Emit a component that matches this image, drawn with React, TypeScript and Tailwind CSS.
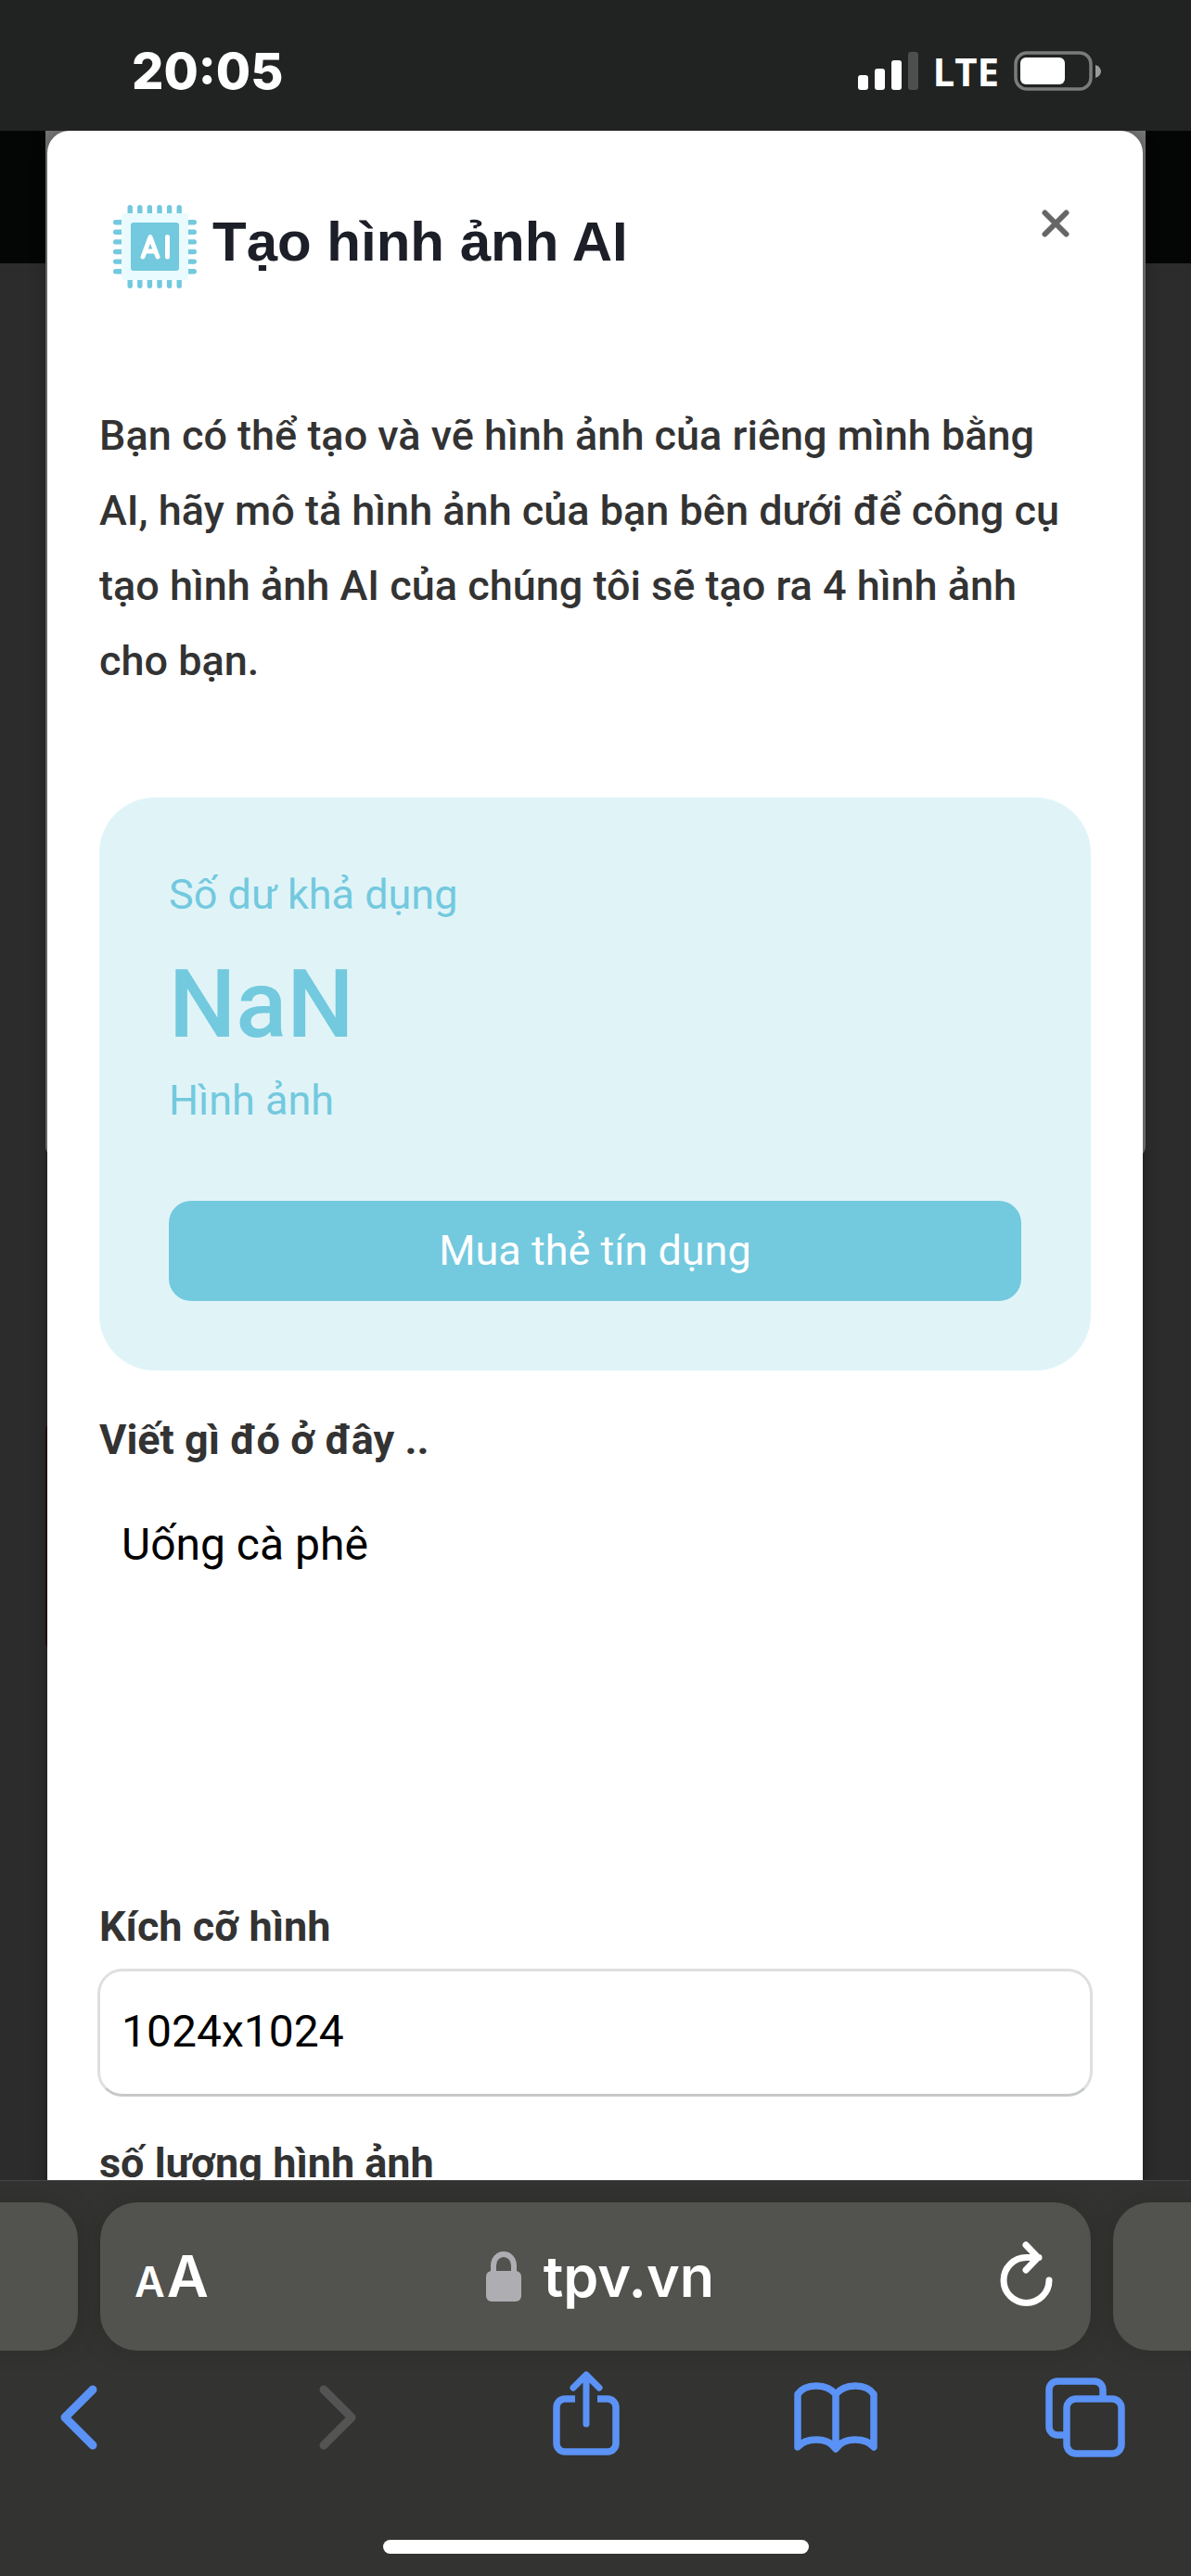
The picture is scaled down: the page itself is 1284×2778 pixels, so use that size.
import { useState } from 'react'

const SIZES = ['1024x1024', '512x512', '256x256']
const FIELD_LABEL = 'block text-[45px] leading-[60px] font-bold'
const TOOL_BUTTON = 'flex h-[100px] items-center justify-center'
const TAB_EDGE = 'w-[124px] shrink-0 rounded-[40px] bg-[#52524f] shadow-[0_0_30px_rgba(0,0,0,0.15)]'

export default function App() {
  return (
    <div className="flex h-screen min-h-[1400px] flex-col overflow-hidden bg-[#2c2c2c] font-[Roboto,sans-serif]">
      <StatusBar />
      <main className="relative min-h-0 flex-1 overflow-hidden">
        <DimmedPage />
        <ImageDialog />
      </main>
      <BrowserBar />
    </div>
  )
}

function StatusBar() {
  return (
    <header className="flex h-[141px] shrink-0 items-center justify-between bg-[#212322] pt-[12px] pr-[96px] pl-[142px] font-[Inter,sans-serif] text-white">
      <time className="text-[54px] leading-[60px] font-extrabold">20:05</time>
      <div className="flex items-center">
        <svg width="66" height="42" viewBox="0 0 66 42" fill="#fff" aria-hidden="true">
          <rect x="0" y="25" width="11" height="16" rx="3" />
          <rect x="18" y="18" width="11" height="23" rx="3" />
          <rect x="36" y="9" width="11" height="32" rx="3" />
          <rect x="54" y="0" width="11" height="41" rx="3" fill="#4d4f4e" />
        </svg>
        <span className="ml-[14px] font-['Open_Sans',sans-serif] text-[42px] leading-[60px] font-bold">LTE</span>
        <svg className="ml-[16px]" width="95" height="44" viewBox="0 0 95 44" aria-hidden="true">
          <rect x="2" y="2" width="81" height="39" rx="12" fill="none" stroke="#7a7c7b" strokeWidth="3.5" />
          <rect x="7" y="7" width="48" height="29" rx="6" fill="#fff" />
          <path d="M88 15c8 3 8 11 0 14z" fill="#9a9b9b" />
        </svg>
      </div>
    </header>
  )
}

// what stays visible of the page behind the dialog
function DimmedPage() {
  return (
    <div className="absolute inset-0" aria-hidden="true">
      <div className="h-[143px] bg-[#040606]" />
      <div className="absolute inset-x-[49px] top-0 h-[1107px] rounded-b-[12px] bg-[#777777]" />
      <div className="absolute top-[1391px] left-[49px] h-[250px] w-[400px] rounded-[12px] bg-[#250b0c]" />
    </div>
  )
}

function ImageDialog() {
  const [prompt, setPrompt] = useState('Uống cà phê')
  const [size, setSize] = useState(SIZES[0])

  return (
    <section
      role="dialog"
      aria-labelledby="dialog-title"
      className="relative mr-[52px] ml-[51px] min-h-full rounded-t-[24px] bg-white px-[56px] pt-[80px] text-[#333333] shadow-[0_0_18px_rgba(0,0,0,0.3)]"
    >
      <div className="flex items-start justify-between pl-[15px]">
        <div className="flex items-center gap-[17px]">
          <ChipIcon />
          <h1 id="dialog-title" className="pb-[10px] font-['Liberation_Sans',sans-serif] text-[60px] leading-[72px] font-bold text-[#1c1e28]">
            Tạo hình ảnh AI
          </h1>
        </div>
        <button type="button" aria-label="Đóng" className="flex h-[40px] w-[76px] items-center justify-center">
          <svg width="30" height="30" viewBox="0 0 30 30" stroke="#666" strokeWidth="6" strokeLinecap="round">
            <path d="M3.5 3.5l23 23M26.5 3.5l-23 23" />
          </svg>
        </button>
      </div>

      <p className="mt-[118px] text-[45px] leading-[81px] font-medium">
        Bạn có thể tạo và vẽ hình ảnh của riêng mình bằng AI, hãy mô tả hình ảnh của bạn bên dưới để công cụ tạo hình
        ảnh AI của chúng tôi sẽ tạo ra 4 hình ảnh cho bạn.
      </p>

      <BalanceCard />

      <label htmlFor="prompt" className={`${FIELD_LABEL} mt-[45px]`}>Viết gì đó ở đây ..</label>
      <textarea
        id="prompt"
        value={prompt}
        onChange={e => setPrompt(e.target.value)}
        className="mt-[15px] block h-[408px] w-full resize-none px-[24px] py-[32px] text-[48px] leading-[72px] text-black outline-none"
      />

      <label htmlFor="size" className={`${FIELD_LABEL} mt-[42px]`}>Kích cỡ hình</label>
      <div className="-mx-[2px] mt-[15px]">
        <select
          id="size"
          value={size}
          onChange={e => setSize(e.target.value)}
          className="block h-[138px] w-full appearance-none rounded-[27px] border-[3px] border-[#dfdfe1] border-b-[#c6c8ca] bg-white px-[23px] pb-[2px] text-[48px] text-black outline-none"
        >
          {SIZES.map(s => <option key={s}>{s}</option>)}
        </select>
      </div>

      <label htmlFor="count" className={`${FIELD_LABEL} mt-[42px]`}>số lượng hình ảnh</label>
      <input id="count" type="number" defaultValue={4} className="mt-[15px] block h-[138px] w-full px-[24px] text-[48px]" />
    </section>
  )
}

function BalanceCard() {
  return (
    <div className="mt-[107px] rounded-[60px] bg-[#e0f4f8] p-[75px] text-[45px] leading-[60px] text-[#73c9de]">
      <div>Số dư khả dụng</div>
      <div className="mt-[14px] text-[102px] leading-[148px] font-medium">NaN</div>
      <div>Hình ảnh</div>
      <button type="button" className="mt-[78px] block h-[108px] w-full rounded-[24px] bg-[#73c9de] text-white">
        Mua thẻ tín dụng
      </button>
    </div>
  )
}

function ChipIcon() {
  const pins = [0, 1, 2, 3, 4, 5]
  return (
    <svg width="90" height="90" viewBox="0 0 90 90" fill="#73c9de" aria-hidden="true">
      {pins.map(i => (
        <g key={i}>
          <rect x={15.5 + i * 10.6} y="0" width="5.4" height="90" rx="2.7" />
          <rect x="0" y={16 + i * 10.6} width="90" height="5.4" rx="2.7" />
        </g>
      ))}
      <rect x="9" y="9" width="72" height="72" rx="3" fill="#e9fbff" />
      <rect x="19" y="19" width="52" height="52" rx="3" />
      <g fill="none" stroke="#fff" strokeWidth="5" strokeLinecap="round" strokeLinejoin="round">
        <path d="M32 56l8-21.5L48 56M35 50h10M58.5 34.5V56" />
      </g>
    </svg>
  )
}

function BrowserBar() {
  return (
    <footer className="relative shrink-0 border-t border-[#464646] bg-[#333331]">
      <div className="-mx-[40px] flex gap-[24px] overflow-hidden pt-[23px] pb-[22px]">
        <div className={TAB_EDGE} />
        <div className="flex h-[160px] flex-1 items-center justify-between rounded-[40px] bg-[#52524f] px-[37px] font-[Inter,sans-serif] font-semibold text-white shadow-[0_0_30px_rgba(0,0,0,0.15)]">
          <button type="button" aria-label="Cỡ chữ" className="flex w-[80px] items-baseline gap-[2px] pt-[6px] leading-[80px]">
            <span className="text-[45px]">A</span>
            <span className="text-[62px]">A</span>
          </button>
          <button type="button" className="flex items-center gap-[24px] pl-[10px] text-[61px] leading-[80px]">
            <svg width="38" height="54" viewBox="0 0 38 54" fill="#aeadb2" aria-hidden="true">
              <rect x="0" y="21" width="38" height="33" rx="6" />
              <path d="M8 24V15a11 12 0 0 1 22 0v9" fill="none" stroke="#aeadb2" strokeWidth="6" />
            </svg>
            tpv.vn
          </button>
          <button type="button" aria-label="Tải lại" className="flex w-[80px] justify-end">
            <svg width="64" height="76" viewBox="0 0 64 76" fill="none" stroke="#fff" strokeWidth="7" strokeLinecap="round" strokeLinejoin="round">
              <path d="M56 42A24.5 24.5 0 1 1 31.5 17.5H45M31 4l13 13.5L31 31" />
            </svg>
          </button>
        </div>
        <div className={TAB_EDGE} />
      </div>
      <nav className="flex justify-between pr-[64px] pl-[35px] text-[#5b92f5]">
        <button type="button" aria-label="Quay lại" className={`${TOOL_BUTTON} w-[100px]`}>
          <svg width="42" height="72" viewBox="0 0 42 72" fill="none" stroke="currentColor" strokeWidth="9" strokeLinecap="round" strokeLinejoin="round">
            <path d="M36 6 6 36l30 30" />
          </svg>
        </button>
        <button type="button" aria-label="Tiếp" disabled className={`${TOOL_BUTTON} w-[108px] pl-[12px] text-[#545454]`}>
          <svg width="42" height="72" viewBox="0 0 42 72" fill="none" stroke="currentColor" strokeWidth="9" strokeLinecap="round" strokeLinejoin="round">
            <path d="M6 6l30 30L6 66" />
          </svg>
        </button>
        <button type="button" aria-label="Chia sẻ" className={`${TOOL_BUTTON} w-[100px]`}>
          <svg width="74" height="100" viewBox="0 0 74 100" fill="none" stroke="currentColor" strokeWidth="7.5">
            <path d="M25 30H14a9 9 0 0 0-9 9v39a9 9 0 0 0 9 9h46a9 9 0 0 0 9-9V39a9 9 0 0 0-9-9H49" />
            <path d="M37 57V5M23 18 37 4l14 14" strokeLinecap="round" strokeLinejoin="round" strokeWidth="7" />
          </svg>
        </button>
        <button type="button" aria-label="Dấu trang" className={`${TOOL_BUTTON} w-[100px]`}>
          <svg width="90" height="78" viewBox="0 0 90 78" fill="none" stroke="currentColor" strokeWidth="7.5" strokeLinecap="round" strokeLinejoin="round">
            <path d="M45 14C36 3 13 1 4 14v57c8-10 32-12 41 2 9-14 33-12 41-2V14C77 1 54 3 45 14zM45 14v58" />
          </svg>
        </button>
        <button type="button" aria-label="Thẻ" className={`${TOOL_BUTTON} w-[100px]`}>
          <svg width="88" height="88" viewBox="0 0 88 88" fill="none" stroke="currentColor" strokeWidth="7.5">
            <rect x="24" y="24" width="59" height="59" rx="10" />
            <path d="M63 24V14A9 9 0 0 0 54 5H14a9 9 0 0 0-9 9v40a9 9 0 0 0 9 9h10" />
          </svg>
        </button>
      </nav>
      <div className="mx-auto mt-[82px] mb-[24px] h-[15px] w-[459px] rounded-full bg-white" />
    </footer>
  )
}
